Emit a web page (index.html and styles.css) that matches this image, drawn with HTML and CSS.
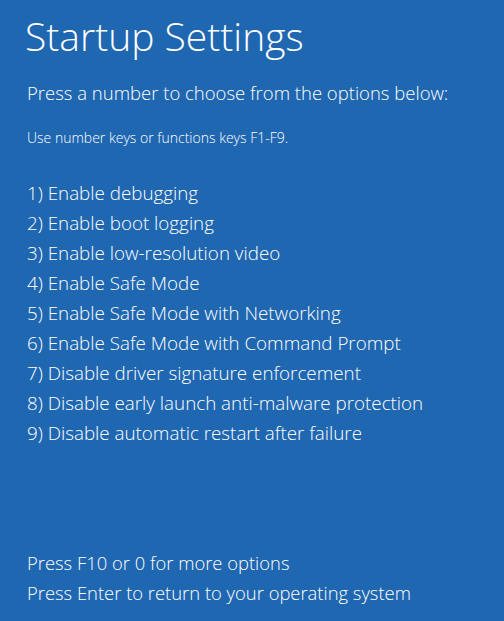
FILE: index.html
```html
<!DOCTYPE html>
<html>
<head>
<meta charset="utf-8">
<link rel="stylesheet" href="styles.css">
</head>
<body>
<div class="screen">
  <h1 class="title">Startup Settings</h1>
  <p class="lead">Press a number to choose from the options below:</p>
  <p class="hint">Use number keys or functions keys F1-F9.</p>
  <ul class="options">
    <li>1) Enable debugging</li>
    <li>2) Enable boot logging</li>
    <li>3) Enable low-resolution video</li>
    <li>4) Enable Safe Mode</li>
    <li>5) Enable Safe Mode with Networking</li>
    <li>6) Enable Safe Mode with Command Prompt</li>
    <li>7) Disable driver signature enforcement</li>
    <li>8) Disable early launch anti-malware protection</li>
    <li>9) Disable automatic restart after failure</li>
  </ul>
  <ul class="footer">
    <li>Press F10 or 0 for more options</li>
    <li>Press Enter to return to your operating system</li>
  </ul>
</div>
</body>
</html>
```
FILE: styles.css
```css
html, body {
  margin: 0;
  padding: 0;
  background: #2067b2;
}
.screen {
  width: 504px;
  height: 621px;
  box-sizing: border-box;
  padding: 10px 0 0 26px;
  display: flex;
  flex-direction: column;
  color: #fff;
  font-family: "Open Sans", sans-serif;
  font-weight: 300;
}
.title {
  margin: 0 0 0 -1px;
  font-size: 39px;
  font-weight: 300;
  line-height: 52px;
}
.lead {
  margin: 19px 0 0 1px;
  font-size: 18.5px;
  line-height: 24px;
}
.hint {
  margin: 25px 0 0 1px;
  font-size: 14px;
  line-height: 16px;
}
.options, .footer {
  list-style: none;
  margin: 0;
  padding: 0 0 0 1px;
  font-size: 18.8px;
  line-height: 30px;
}
.options { margin-top: 32px; }
.footer {
  margin-top: auto;
  margin-bottom: 13px;
  font-size: 18.4px;
}
```
